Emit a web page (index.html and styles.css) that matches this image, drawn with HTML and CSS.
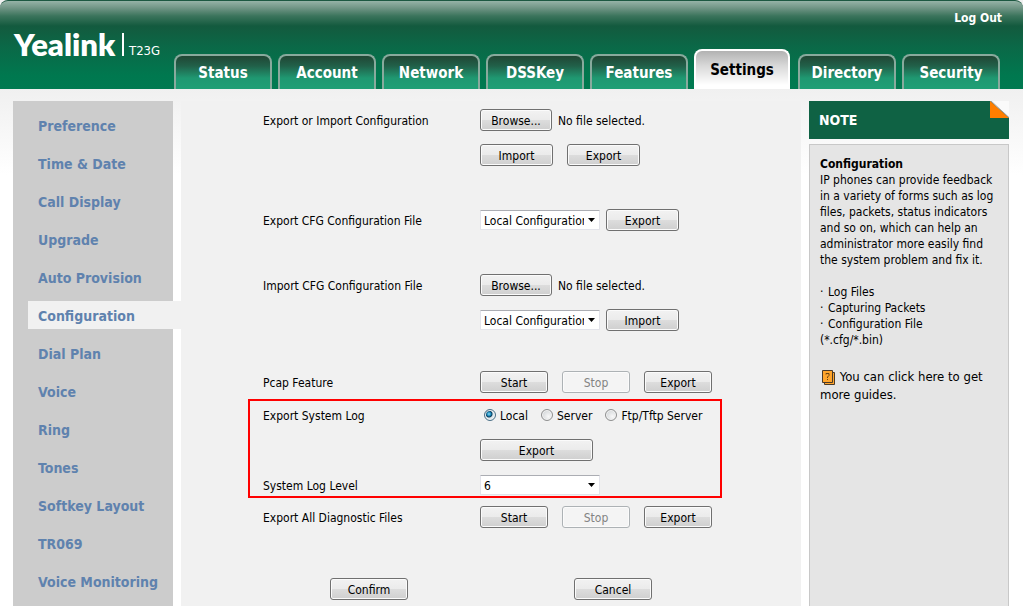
FILE: index.html
```html
<!DOCTYPE html>
<html lang="en">
<head>
<meta charset="utf-8">
<title>Yealink T23G - Configuration</title>
<link rel="stylesheet" href="styles.css">
</head>
<body>
<header class="header">
  <div class="brand">
    <span class="brand-name">Yealink</span>
    <span class="brand-model">T23G</span>
  </div>
  <nav class="tabs">
    <a class="tab" href="#">Status</a>
    <a class="tab" href="#">Account</a>
    <a class="tab" href="#">Network</a>
    <a class="tab" href="#">DSSKey</a>
    <a class="tab" href="#">Features</a>
    <a class="tab tab-active" href="#">Settings</a>
    <a class="tab" href="#">Directory</a>
    <a class="tab" href="#">Security</a>
  </nav>
  <a class="logout" href="#">Log Out</a>
</header>
<div class="page">
  <nav class="sidebar">
    <a class="side-link" href="#">Preference</a>
    <a class="side-link" href="#">Time &amp; Date</a>
    <a class="side-link" href="#">Call Display</a>
    <a class="side-link" href="#">Upgrade</a>
    <a class="side-link" href="#">Auto Provision</a>
    <a class="side-link side-active" href="#">Configuration</a>
    <a class="side-link" href="#">Dial Plan</a>
    <a class="side-link" href="#">Voice</a>
    <a class="side-link" href="#">Ring</a>
    <a class="side-link" href="#">Tones</a>
    <a class="side-link" href="#">Softkey Layout</a>
    <a class="side-link" href="#">TR069</a>
    <a class="side-link" href="#">Voice Monitoring</a>
  </nav>
  <main class="main">
    <form class="form">
      <section class="group">
        <div class="row">
          <span class="label">Export or Import Configuration</span>
          <div class="controls tight"><button type="button" class="btn browse">Browse...</button><span class="label">No file selected.</span></div>
        </div>
        <div class="row">
          <div class="controls second"><button type="button" class="btn">Import</button><button type="button" class="btn">Export</button></div>
        </div>
      </section>
      <section class="group">
        <div class="row">
          <label class="label" for="export-cfg">Export CFG Configuration File</label>
          <div class="controls tight">
            <select class="select" id="export-cfg"><option>Local Configuration</option></select>
            <button type="button" class="btn">Export</button>
          </div>
        </div>
      </section>
      <section class="group">
        <div class="row">
          <label class="label" for="import-cfg">Import CFG Configuration File</label>
          <div class="controls tight"><button type="button" class="btn browse">Browse...</button><span class="label">No file selected.</span></div>
        </div>
        <div class="row">
          <div class="controls second tight">
            <select class="select" id="import-cfg"><option>Local Configuration</option></select>
            <button type="button" class="btn">Import</button>
          </div>
        </div>
      </section>
      <section class="logs">
        <div class="row">
          <span class="label">Pcap Feature</span>
          <div class="controls"><button type="button" class="btn small">Start</button><button type="button" class="btn small" disabled>Stop</button><button type="button" class="btn small">Export</button></div>
        </div>
        <div class="highlight">
          <div class="row">
            <span class="label">Export System Log</span>
            <div class="controls radios">
              <label class="choice"><input class="radio" type="radio" name="log" checked><span class="label">Local</span></label>
              <label class="choice"><input class="radio" type="radio" name="log"><span class="label">Server</span></label>
              <label class="choice"><input class="radio" type="radio" name="log"><span class="label">Ftp/Tftp Server</span></label>
            </div>
          </div>
          <div class="row">
            <div class="controls second"><button type="button" class="btn wide">Export</button></div>
          </div>
          <div class="row">
            <label class="label" for="level">System Log Level</label>
            <div class="controls"><select class="select" id="level"><option>6</option></select></div>
          </div>
        </div>
        <div class="row">
          <span class="label">Export All Diagnostic Files</span>
          <div class="controls"><button type="button" class="btn small">Start</button><button type="button" class="btn small" disabled>Stop</button><button type="button" class="btn small">Export</button></div>
        </div>
      </section>
      <div class="actions">
        <button type="submit" class="btn action">Confirm</button>
        <button type="reset" class="btn action">Cancel</button>
      </div>
    </form>
  </main>
  <aside class="note">
    <h2 class="note-head">NOTE
      <svg class="fold" width="19" height="17" viewBox="0 0 19 17" aria-hidden="true"><path d="M0 0H19V17Z" fill="#fafafa"/><path d="M0 0L19 17H0Z" fill="#ff7e00"/><path d="M1 0L19 16.500" stroke="#777" stroke-width=".7"/></svg>
    </h2>
    <div class="note-body">
      <h3 class="note-title">Configuration</h3>
      <p class="note-text">IP phones can provide feedback<br>in a variety of forms such as log<br>files, packets, status indicators<br>and so on, which can help an<br>administrator more easily find<br>the system problem and fix it.</p>
      <p class="note-text"><span class="dot">·</span>Log Files<br><span class="dot">·</span>Capturing Packets<br><span class="dot">·</span>Configuration File<br>(*.cfg/*.bin)</p>
      <p class="guide">
        <svg class="guide-icon" width="14" height="16" viewBox="0 0 14 16" aria-hidden="true"><path d="M2.500 2.500H12.500V14.500H2.500Z" fill="#ffa52c" stroke="#4b3a28"/><path d="M.5 .5H10.500V12.500H.5Z" fill="#ffa52c" stroke="#4b3a28"/><path d="M4 4.500V3.500H7V5.500L5.500 7V8M5.500 9V10" fill="none" stroke="#6b4310"/></svg>
        <a class="guide-link" href="#">You can click here to get more guides.</a>
      </p>
    </div>
  </aside>
</div>
</body>
</html>
```
FILE: styles.css
```css
* { box-sizing: border-box; }
body {
  margin: 0;
  min-height: 100vh;
  display: flex;
  flex-direction: column;
  background: linear-gradient(#f0f0f0 89px, #fff 175px) #fff;
  color: #000;
  font-family: "DejaVu Sans Condensed", Tahoma, "DejaVu Sans", sans-serif;
  font-size: 12px;
  line-height: 16px;
}
a { color: inherit; text-decoration: none; }

.header {
  display: flex;
  align-items: flex-end;
  height: 89px;
  padding-left: 14px;
  position: relative;
  color: #fff;
  font-weight: bold;
  border-top: 1px solid #1d5841;
  border-radius: 8px 8px 0 0;
  background: linear-gradient(#96b3a7, #709585 7px, #3b745c 15px, #135a3e 25px, #0b6847 45px, #00784f 75px, #007a51);
}
.brand { display: flex; align-items: flex-end; width: 160px; height: 55px; align-self: flex-start; }
.brand-name {
  font-family: Lato, sans-serif;
  font-size: 31px;
  font-weight: 800;
  line-height: 22px;
  height: 23px;
  width: 110px;
  margin-right: 5px;
  border-right: 2px solid #fff;
}
.brand-model { font-size: 13px; font-weight: normal; line-height: 10px; }
.tabs { display: flex; align-items: flex-end; gap: 6px; }
.tab {
  width: 98px;
  height: 35px;
  border: 2px solid #88aa9d;
  border-bottom: 0;
  border-radius: 8px 8px 0 0;
  background: linear-gradient(#204634, #216049 10px, #1f9871 22px, #1f9f76);
  font-size: 15px;
  line-height: 34px;
  text-align: center;
}
.tab-active {
  width: 96px;
  height: 40px;
  margin-right: 2px;
  border-color: #fff;
  background: linear-gradient(#b2b2b2, #d9d9d9 15px, #fff 34px);
  color: #000;
  line-height: 38px;
}
.logout { position: absolute; top: 9px; right: 21px; }

.page { flex: 1; display: flex; gap: 8px; padding: 12px 14px 0 13px; }
.sidebar {
  display: flex;
  flex-direction: column;
  gap: 10px;
  width: 160px;
  padding-top: 10px;
  background: #ccc;
}
.side-link {
  height: 28px;
  margin-left: 15px;
  padding-left: 10px;
  color: #5f82ae;
  font-size: 14px;
  font-weight: bold;
  line-height: 30px;
  white-space: nowrap;
}
.side-active { margin-right: -8px; background: #f1f1f1; }

.main { flex: 1; background: #f1f1f1; }
.form { padding: 8px 79px 6px 82px; }
.group { display: flex; flex-direction: column; gap: 13px; margin-bottom: 43px; }
.logs { margin-top: -3px; }
.row { display: grid; grid-template-columns: 217px 1fr; align-items: center; height: 22px; white-space: nowrap; }
.label { padding-top: 2px; }
.controls { display: flex; align-items: center; gap: 14px; }
.tight { gap: 6px; }
.second { grid-column: 2; }
.highlight {
  display: flex;
  flex-direction: column;
  gap: 13px;
  margin: 6px 0 8px -15px;
  padding: 3px 0 0 13px;
  border: 2px solid #f00;
}
.btn {
  width: 73px;
  height: 22px;
  padding: 2px 0 0;
  border: 1px solid #707070;
  border-radius: 3px;
  background: linear-gradient(#f2f2f2, #ebebeb 50%, #ddd 50%, #cfcfcf);
  box-shadow: inset 0 0 0 1px #fbfbfb;
  color: #000;
  font: inherit;
}
.btn:disabled { border-color: #adb2b5; background: #f4f4f4; color: #838383; }
.browse { width: 72px; }
.small { width: 68px; }
.wide { width: 113px; }
.action { width: 78px; }
.select {
  appearance: none;
  width: 120px;
  height: 20px;
  padding: 2px 15px 0 3px;
  border: 1px solid #e2e3ea;
  border-top-color: #abadb3;
  border-radius: 1px;
  background: #fff url("data:image/svg+xml,%3Csvg xmlns='http://www.w3.org/2000/svg' width='7' height='4'%3E%3Cpath d='M0 0H7L3.5 4Z'/%3E%3C/svg%3E") no-repeat right 4px center;
  color: #000;
  font: inherit;
  text-overflow: clip;
}
.radios { gap: 13px; padding-left: 4px; }
.choice { display: flex; align-items: center; gap: 4px; }
.radio {
  appearance: none;
  width: 12px;
  height: 12px;
  margin: 0;
  border: 1px solid #8e8f8f;
  border-radius: 50%;
  background: radial-gradient(circle at 65% 65%, #f8f8f8, #c8cccf);
  box-shadow: inset 0 0 0 1px #f4f4f4;
}
.radio:checked { border-color: #4a6f86; background: radial-gradient(circle at 40% 40%, #8fdcf8, #1584b5 2px, #0b3c5c 3px, #dce6eb 4px); }
.actions { display: flex; gap: 166px; padding: 50px 0 0 67px; }

.note { display: flex; flex-direction: column; gap: 5px; width: 200px; }
.note-head {
  position: relative;
  margin: 0;
  padding: 0 10px;
  background: #0f6244;
  color: #fff;
  font-size: 14px;
  line-height: 38px;
}
.fold { position: absolute; top: 0; right: 0; }
.note-body { flex: 1; padding: 11px 0 0 10px; border: 1px solid #c8c8c8; border-bottom: 0; background: #e5e5e5; white-space: nowrap; }
.note-title { margin: 0; font-size: 12px; }
.note-text { margin: 0 0 16px; }
.dot { display: inline-block; width: 8px; }
.guide { margin: 20px 12px 0 0; font-size: 13px; line-height: 17px; white-space: normal; }
.guide-icon { margin: 0 0 0 2px; vertical-align: middle; }
```
